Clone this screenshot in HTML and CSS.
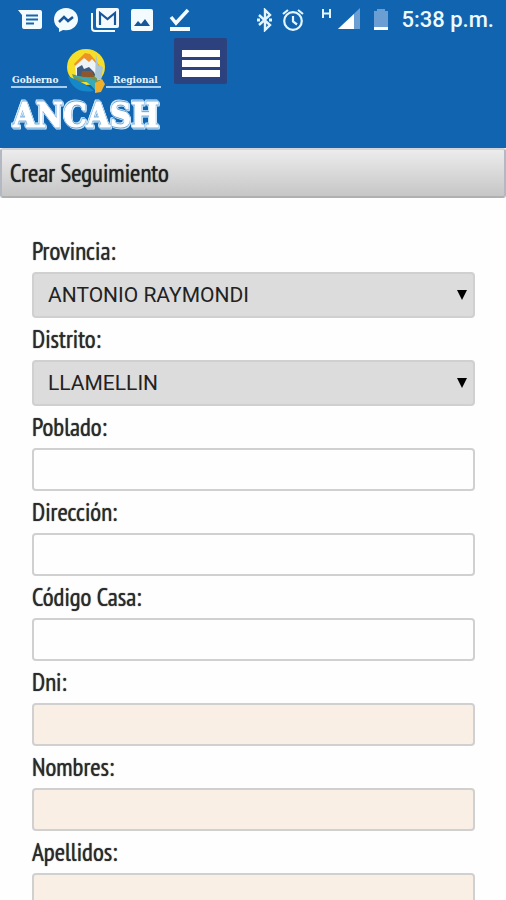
FILE: index.html
```html
<!DOCTYPE html>
<html lang="es">
<head>
<meta charset="utf-8">
<meta name="viewport" content="width=device-width, initial-scale=1">
<title>Crear Seguimiento</title>
<link rel="stylesheet" href="styles.css">
</head>
<body>
<header class="header">
  <div class="status">
    <div class="status-left">
      <svg width="24" height="24" viewBox="0 0 24 24" aria-hidden="true"><path fill="#f4fbff" d="M0 2h22q2 0 2 2v15q0 2-2 2H6q-2 0-2-2V7z"/><path stroke="#1766ae" stroke-width="2" d="M8 7.500h12M8 11.500h12M8 15.500h8"/></svg>
      <svg width="26" height="26" viewBox="0 0 26 26" aria-hidden="true"><path fill="#f4fbff" d="M13 1C6 1 1 6 1 12.500c0 4 2 7 5 9V25l4-2 3 .3c7 0 12-5 12-11S20 1 13 1z"/><path fill="none" stroke="#17569a" stroke-width="2.500" d="m6 15 5-5 4 4 5-4"/></svg>
      <svg width="30" height="26" viewBox="0 0 30 26" aria-hidden="true"><path fill="none" stroke="#f4fbff" stroke-width="2" d="M2 6v15q0 3 3 3h20"/><rect x="6" y="1" width="23" height="20" rx="2" fill="#f4fbff"/><path fill="none" stroke="#17569a" stroke-width="2.200" d="M10 18V6l7.500 6L25 6v12"/></svg>
      <svg width="22" height="24" viewBox="0 0 22 24" aria-hidden="true"><rect y="1" width="22" height="22" rx="2" fill="#f4fbff"/><path fill="#17569a" d="m3 18 4-5 3 3 4-5 5 7z"/></svg>
      <svg class="done" width="22" height="24" viewBox="0 0 22 24" aria-hidden="true"><path fill="none" stroke="#f4fbff" stroke-width="3.500" d="m2 9 5 6L19 2"/><path fill="#f4fbff" d="M1 19h20v4H1z"/></svg>
    </div>
    <div class="status-right">
      <svg width="16" height="24" viewBox="0 0 16 24" aria-hidden="true"><path fill="none" stroke="#e3f6ff" stroke-width="2.400" d="m2 7 11 10-5 5V2l5 5L2 17"/><path fill="#e3f6ff" d="M0 10.500h3v3H0zM12 10.500h3v3h-3z"/></svg>
      <svg width="24" height="24" viewBox="0 0 24 24" aria-hidden="true"><g fill="none" stroke="#e3f6ff" stroke-width="2.200"><circle cx="12" cy="13" r="8.800"/><path d="M12 8v5.500l4 3M2 6l5-4M22 6l-5-4"/></g></svg>
      <svg class="signal" width="40" height="26" viewBox="0 0 40 26" aria-hidden="true"><path fill="none" stroke="#e3f6ff" stroke-width="2" d="M2 2v9M9 2v9M2 6.500h7"/><path fill="#6b9fd3" d="M39 1v21H17z"/><path fill="#fff" d="M33 7v15H17z"/></svg>
      <svg width="16" height="24" viewBox="0 0 16 24" aria-hidden="true"><path fill="#6b9fd3" d="M1 3h3V1h8v2h3v16H1z"/><path fill="#fff" d="M1 19h14v3H1z"/></svg>
      <span class="time">5:38 p.m.</span>
    </div>
  </div>
  <div class="brand">
    <svg class="logo" width="156" height="96" viewBox="0 0 156 96" role="img" aria-label="Gobierno Regional Ancash">
      <ellipse cx="76" cy="29" rx="19" ry="18" fill="#f5df28"/>
      <path fill="#ef9226" d="m64 26 11-11 5 1 10 12-4 4H67z"/>
      <path fill="#eef3f7" d="m65 28 9-8 5 4 3-3 8 9-3 8H66z"/>
      <path fill="#3f5c80" d="m67 30 5-3 2 4 5-2 5 5 3 7H67z"/>
      <path fill="#77924c" d="M62 36q12 5 24 1l2 7H65z"/>
      <path fill="#8c572c" d="M72 33h10l2 6H71z"/>
      <path fill="#a9c7d9" d="m86 16 2 11 5 2-2 14-6-4z"/>
      <path fill="#1687c8" d="M58 38c5 3 15 5 26 15-12 2-22-1-26-15z"/>
      <path fill="#37aab9" d="M62 38c10 2 19 8 23 14l4-7c-7-5-15-7-27-7z"/>
      <path fill="#efae2c" d="m85 45 7-4 3 5-4 8-6 1z"/>
      <path stroke="#d8efff" stroke-width="1.500" d="M1 49h56M96 49h55"/>
      <text class="logo-small" x="2" y="45">Gobierno</text>
      <text class="logo-small" x="103" y="45">Regional</text>
      <text class="logo-big" x="3" y="89">ANCASH</text>
    </svg>
    <button class="menu" type="button" aria-label="Menú"><span></span><span></span><span></span></button>
  </div>
</header>
<h1 class="title">Crear Seguimiento</h1>
<main>
  <form class="form">
    <label for="provincia">Provincia:</label>
    <div class="select"><select id="provincia"><option>ANTONIO RAYMONDI</option></select></div>
    <label for="distrito">Distrito:</label>
    <div class="select"><select id="distrito"><option>LLAMELLIN</option></select></div>
    <label for="poblado">Poblado:</label>
    <input id="poblado" type="text">
    <label for="direccion">Dirección:</label>
    <input id="direccion" type="text">
    <label for="codigo">Código Casa:</label>
    <input id="codigo" type="text">
    <label for="dni">Dni:</label>
    <input class="locked" id="dni" type="text" readonly>
    <label for="nombres">Nombres:</label>
    <input class="locked" id="nombres" type="text" readonly>
    <label for="apellidos">Apellidos:</label>
    <input class="locked" id="apellidos" type="text" readonly>
  </form>
</main>
</body>
</html>
```
FILE: styles.css
```css
* { box-sizing: border-box; }

body {
  margin: 0;
  background: #fefefe;
  color: #2b2b2b;
  font-family: "PT Sans Narrow", "Liberation Sans Narrow", "Noto Sans CJK SC", sans-serif;
}

.header {
  background: #1064b0;
  padding-bottom: 14px;
}

.status {
  display: flex;
  justify-content: space-between;
  align-items: center;
  height: 38px;
  padding: 2px 12px 0 18px;
}

.status-left,
.status-right {
  display: flex;
  align-items: center;
}

.status-left { gap: 11px; }
.status-right { gap: 8px; }
.done { margin-left: 5px; }
.signal { margin: 0 4px 0 8px; }

.time {
  margin-left: 4px;
  color: #eefaff;
  font: 500 22px/24px Roboto, sans-serif;
}

.brand {
  display: flex;
  align-items: flex-start;
  gap: 8px;
  padding-left: 10px;
}

.logo { display: block; }

.logo-small {
  fill: #e6f6ff;
  font: bold 10px "DejaVu Serif Condensed", "DejaVu Serif", serif;
}

.logo-big {
  fill: #fff;
  stroke: #fff;
  stroke-width: 1px;
  stroke-linejoin: round;
  font: bold 33px "DejaVu Serif Condensed", "DejaVu Serif", serif;
  filter:
    drop-shadow(0 1px 0 #6fa6d6) drop-shadow(0 -1px 0 #6fa6d6)
    drop-shadow(1px 1px 0 #c9e6fa) drop-shadow(-1px -1px 0 #c9e6fa);
}

.menu {
  display: flex;
  flex-direction: column;
  justify-content: center;
  gap: 3px;
  width: 53px;
  height: 46px;
  padding: 4px 7px 0 8px;
  border: 0;
  border-radius: 2px;
  background: #2c427f;
}

.menu span {
  height: 7px;
  background: #fff;
}

.title {
  height: 50px;
  margin: 0;
  padding: 0 8px;
  border: 2px solid #b4b8c2;
  border-top-color: #d4d4d8;
  border-bottom-color: #b0b0b0;
  border-radius: 3px;
  background: linear-gradient(#ececec, #c6c6c6);
  color: #222;
  font-size: 25px;
  font-weight: 400;
  line-height: 46px;
  text-shadow: 0 0 1px #222;
}

.form {
  display: flex;
  flex-direction: column;
  padding: 32px 31px 32px 32px;
}

label {
  font-size: 25px;
  line-height: 42px;
  text-shadow: 0 0 1px #2b2b2b;
}

.select {
  display: grid;
  align-items: center;
}

.select::after {
  content: "";
  grid-area: 1 / 1;
  justify-self: end;
  margin-right: 8px;
  border: 5px solid transparent;
  border-top: 10px solid #000;
  border-bottom: 0;
  pointer-events: none;
}

select {
  appearance: none;
  grid-area: 1 / 1;
  width: 100%;
  height: 46px;
  padding: 0 32px 0 14px;
  border: 2px solid #d0d0d0;
  border-radius: 4px;
  background: #dcdcdc;
  color: #222;
  font: 21px Roboto, sans-serif;
}

input {
  width: 100%;
  height: 43px;
  padding: 0 14px;
  border: 2px solid #d0d0d0;
  border-radius: 4px;
  background: #fefefe;
  font: 21px Roboto, sans-serif;
}

.locked { background: #f9efe5; }
```
